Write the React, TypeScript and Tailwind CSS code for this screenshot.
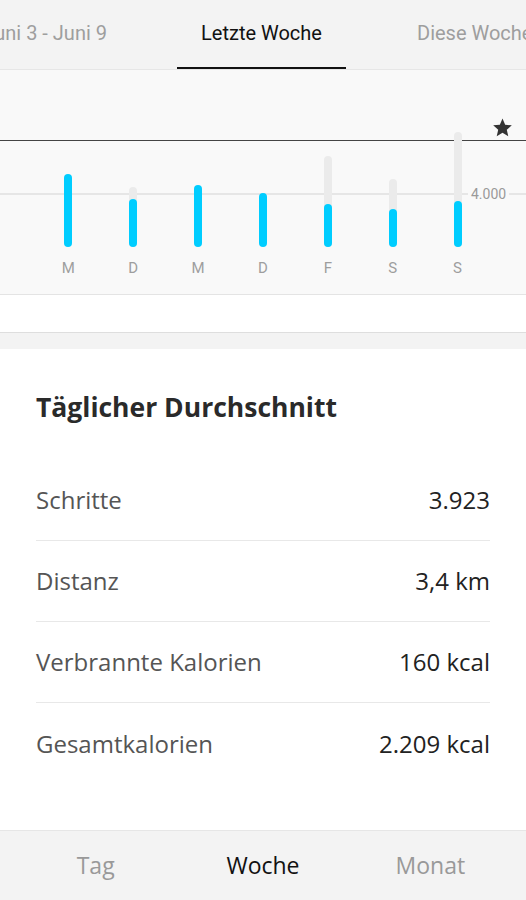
import React from 'react';

type Day = { label: string; goal: number; steps: number };

// heights in px, measured from the chart baseline
const days: Day[] = [
    { label: 'M', goal: 0, steps: 73 },
    { label: 'D', goal: 60, steps: 48 },
    { label: 'M', goal: 0, steps: 62 },
    { label: 'D', goal: 0, steps: 54 },
    { label: 'F', goal: 91, steps: 43 },
    { label: 'S', goal: 68, steps: 38 },
    { label: 'S', goal: 115, steps: 46 },
];

const stats = [
    { label: 'Schritte', value: '3.923' },
    { label: 'Distanz', value: '3,4 km' },
    { label: 'Verbrannte Kalorien', value: '160 kcal' },
    { label: 'Gesamtkalorien', value: '2.209 kcal' },
];

function StarIcon() {
    return (
        <svg viewBox="0 0 24 24" className="w-[21px] h-[21px]" fill="#333333">
            <path d="M12 1.8l3.05 7.02 7.6.68-5.75 5.02 1.7 7.46L12 18.1l-6.6 3.88 1.7-7.46L1.35 9.5l7.6-.68z" />
        </svg>
    );
}

function WeekTabs() {
    return (
        <div className="h-[70px] bg-[#f3f3f3] border-b border-[#e6e6e6] overflow-hidden flex items-stretch whitespace-nowrap font-['Roboto',sans-serif] text-[20px]">
            <div className="w-[177px] shrink-0 flex justify-end items-center pr-[70px] pb-[4px] text-[#9e9e9e]">
                Juni 3 - Juni 9
            </div>
            <div className="w-[169px] shrink-0 flex items-center justify-center pb-[2px] text-[#111] border-b-2 border-[#111]">
                Letzte Woche
            </div>
            <div className="shrink-0 flex items-center pl-[71px] pb-[4px] text-[#9e9e9e]">
                Diese Woche
            </div>
        </div>
    );
}

function WeekChart() {
    return (
        <div className="relative h-[225px] bg-[#f9f9f9] border-b border-[#e4e4e4] font-['Roboto',sans-serif]">
            {/* goal line + reference line */}
            <div className="absolute left-0 right-0 top-[70px] h-px bg-[#444]" />
            <div className="absolute left-0 right-0 top-[123px] h-[2px] bg-[#e6e6e6]" />
            <div className="absolute left-[468px] top-[114px] px-[3px] bg-[#f9f9f9] text-[14px] leading-[20px] text-[#9a9a9a]">
                4.000
            </div>
            <div className="absolute left-[492px] top-[47px]">
                <StarIcon />
            </div>

            <div className="relative pl-[36px]">
                <div className="w-[454px] grid grid-cols-7">
                    {days.map((d, i) => (
                        <div key={i} className="flex flex-col items-center">
                            <div className="h-[177px] flex items-end">
                                <div
                                    className={`relative w-[8px] rounded-full ${d.goal ? 'bg-[#ebebeb]' : ''}`}
                                    style={{ height: Math.max(d.goal, d.steps) }}
                                >
                                    <div
                                        className="absolute bottom-0 left-0 w-[8px] rounded-full bg-[#00cdff]"
                                        style={{ height: d.steps }}
                                    />
                                </div>
                            </div>
                            <div className="mt-[12px] text-[15px] leading-[18px] text-[#9e9e9e]">{d.label}</div>
                        </div>
                    ))}
                </div>
            </div>
        </div>
    );
}

export default function App() {
    return (
        <div className="w-[526px] h-[900px] flex flex-col bg-white overflow-hidden font-['Open_Sans',sans-serif]">
            <WeekTabs />
            <WeekChart />

            <div className="h-[38px] bg-white border-b border-[#dedede]" />
            <div className="h-[16px] bg-[#f3f3f3]" />

            {/* Daily average */}
            <div className="flex-1 bg-white px-[36px] pt-[40px]">
                <h2 className="text-[26.5px] leading-[36px] font-bold text-[#2a2a2a]">Täglicher Durchschnitt</h2>
                <div className="mt-[35px]">
                    {stats.map((s, i) => (
                        <div
                            key={s.label}
                            className={`h-[81px] flex items-center justify-between text-[24px] ${i < stats.length - 1 ? 'border-b border-[#e8e8e8]' : ''}`}
                        >
                            <span className="text-[#555]">{s.label}</span>
                            <span className="text-[#222]">{s.value}</span>
                        </div>
                    ))}
                </div>
            </div>

            {/* Range switcher */}
            <div className="h-[70px] bg-[#f3f3f3] border-t border-[#e6e6e6] px-[12px] grid grid-cols-3 items-center text-[23px]">
                <div className="text-center text-[#999]">Tag</div>
                <div className="text-center text-[#111]">Woche</div>
                <div className="text-center text-[#999]">Monat</div>
            </div>
        </div>
    );
}
